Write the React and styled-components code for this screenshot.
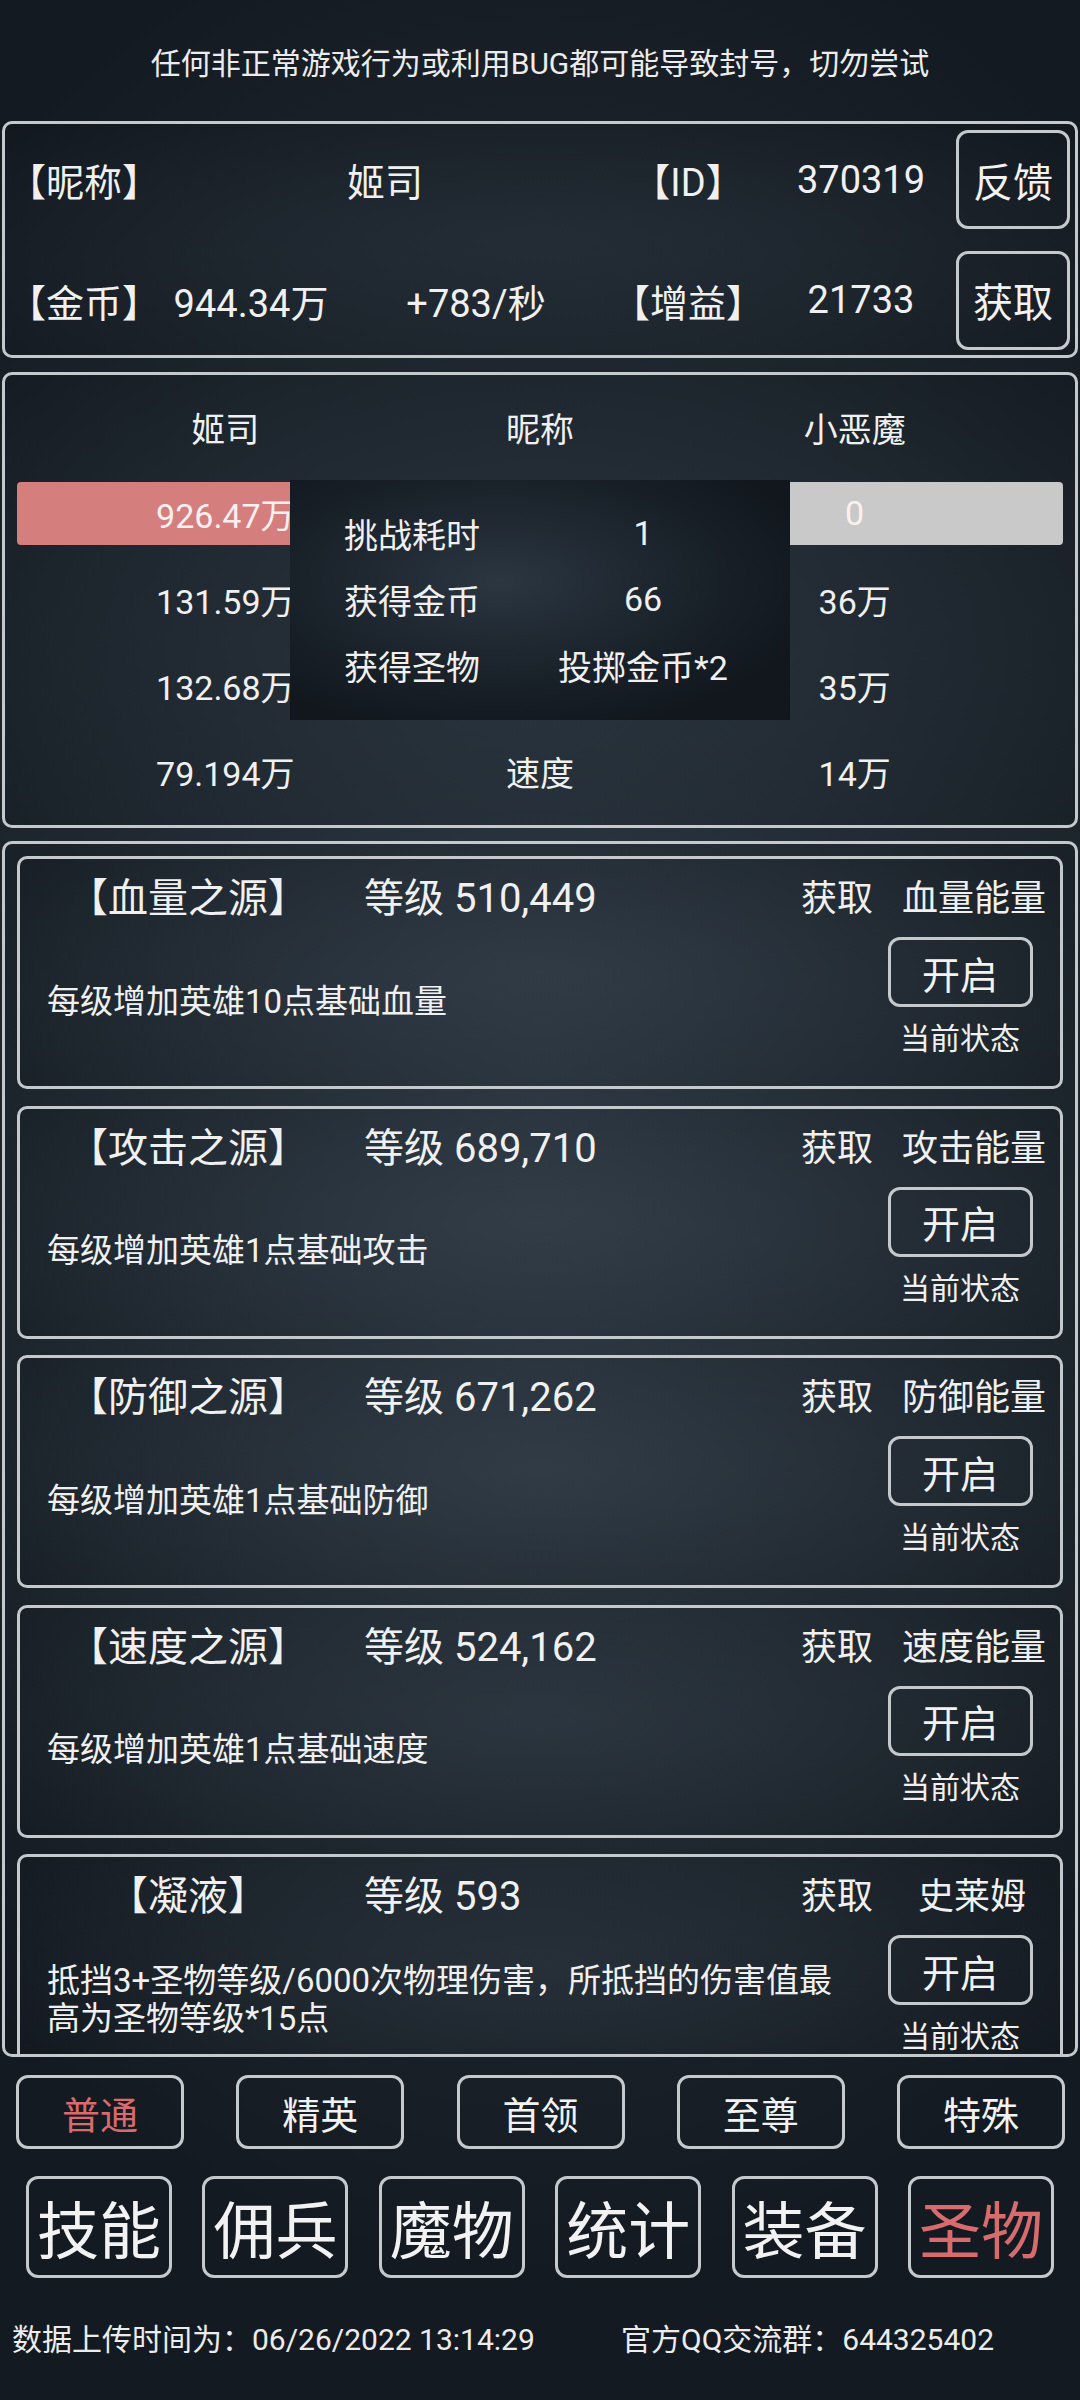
import React from 'react';
import styled, { createGlobalStyle } from 'styled-components';

const GlobalStyle = createGlobalStyle`
  html, body {
    margin: 0;
    padding: 0;
  }
  body {
    background: #151b22;
    font-family: Roboto, "Noto Sans CJK SC", sans-serif;
    color: #f0f0f0;
  }
  * {
    box-sizing: border-box;
  }
`;

const LINE = '#c6c9cc';
const RED = '#d86b6e';

const Page = styled.div`
  width: 1080px;
  height: 2400px;
  overflow: hidden;
  padding: 0 2px;
  display: flex;
  flex-direction: column;
  background: radial-gradient(ellipse 80% 50% at 50% 45%, #2d3843 0%, #1f2830 55%, #141a21 100%);
`;

const Notice = styled.div`
  height: 121px;
  flex-shrink: 0;
  display: flex;
  align-items: center;
  justify-content: center;
  font-size: 30px;
  color: #ececec;
`;

const Frame = styled.section`
  flex-shrink: 0;
  border: 3px solid ${LINE};
  border-radius: 10px;
  background: radial-gradient(ellipse at 50% 50%, rgba(60, 72, 84, 0.25), rgba(8, 12, 16, 0.15));
`;

// ---------- info panel ----------
const InfoPanel = styled(Frame)`
  height: 237px;
  padding-left: 3px;
  display: grid;
  grid-template-columns: 152px 182px 268px 156px 190px 114px;
  grid-template-rows: 99px 98px;
  row-gap: 22px;
  align-content: center;
  font-size: 38px;
`;

const Cell = styled.div`
  display: flex;
  align-items: center;
  justify-content: ${p => (p.$left ? 'flex-start' : 'center')};
  grid-column: ${p => p.$span || 'auto'};
  white-space: nowrap;
`;

const OutlineButton = styled.button`
  font-family: inherit;
  background: transparent;
  color: #f2f2f2;
  border: 3px solid ${LINE};
  border-radius: 12px;
  padding: 0;
  display: flex;
  align-items: center;
  justify-content: center;
  white-space: nowrap;
  cursor: pointer;
`;

const SideButton = styled(OutlineButton)`
  width: 114px;
  height: 99px;
  font-size: 40px;
  align-self: center;
`;

// ---------- battle panel ----------
const BattlePanel = styled(Frame)`
  position: relative;
  height: 456px;
  margin-top: 14px;
  padding: 9px 12px;
  font-size: 34px;
`;

const BattleRow = styled.div`
  height: 86px;
  padding: 0 51px;
  display: grid;
  grid-template-columns: repeat(3, 1fr);
  align-items: center;
  text-align: center;
  white-space: nowrap;
`;

const HpBar = styled(BattleRow)`
  height: 63px;
  margin: 11.5px 0;
  border-radius: 4px;
  background: linear-gradient(90deg, #d47e7e 0 50%, #c9c9c9 50% 100%);
  color: #fbf0f0;
`;

const ResultPopup = styled.div`
  position: absolute;
  left: 285px;
  top: 105px;
  width: 500px;
  height: 240px;
  padding: 20px 0 0 54px;
  display: grid;
  grid-template-columns: 186px 226px;
  grid-auto-rows: 66px;
  align-items: center;
  align-content: start;
  background: radial-gradient(ellipse 65% 65% at 42% 42%, #2b3641 0%, #1a222a 60%, #11171d 100%);
  font-size: 34px;
  white-space: nowrap;
`;

const PopupValue = styled.div`
  text-align: center;
`;

// ---------- relic list ----------
const RelicPanel = styled(Frame)`
  height: 1216px;
  margin-top: 13px;
  padding: 12px 12px 0;
  overflow: hidden;
  display: flex;
  flex-direction: column;
  gap: 16.5px;
`;

const RelicCard = styled.div`
  flex-shrink: 0;
  height: 233px;
  border: 3px solid ${LINE};
  border-radius: 10px;
  display: flex;
  flex-direction: column;
  background: radial-gradient(ellipse 70% 90% at 50% 50%, rgba(62, 74, 86, 0.3), rgba(8, 12, 16, 0.2));
`;

const CardHead = styled.div`
  height: 72px;
  padding-right: 18px;
  display: flex;
  align-items: center;
  white-space: nowrap;
`;

const RelicName = styled.div`
  width: 336px;
  text-align: center;
  font-size: 40px;
`;

const RelicLevel = styled.div`
  flex: 1;
  margin-left: 8px;
  font-size: 40px;
`;

const GetLabel = styled.div`
  width: 70px;
  text-align: center;
  font-size: 36px;
`;

const EnergyName = styled.div`
  width: 140px;
  margin-left: 31px;
  text-align: center;
  font-size: 36px;
`;

const CardBody = styled.div`
  flex: 1;
  display: flex;
  padding: 0 15px 0 27px;
`;

const RelicDesc = styled.div`
  flex: 1;
  align-self: center;
  max-width: 800px;
  margin-bottom: 14px;
  font-size: 33px;
  line-height: 38px;
`;

const SwitchColumn = styled.div`
  width: 170px;
  margin-left: auto;
  padding-top: 6px;
  display: flex;
  flex-direction: column;
  align-items: center;
`;

const SwitchButton = styled(OutlineButton)`
  width: 145px;
  height: 70px;
  font-size: 38px;
`;

const StateLabel = styled.div`
  margin-top: 14px;
  font-size: 30px;
  line-height: 36px;
  white-space: nowrap;
`;

// ---------- bottom navigation ----------
const TierRow = styled.div`
  flex-shrink: 0;
  margin-top: 18px;
  padding: 0 13px 0 14px;
  display: flex;
  justify-content: space-between;
`;

const TierTab = styled(OutlineButton)`
  width: 168px;
  height: 74px;
  font-size: 38px;
  color: ${p => (p.$active ? RED : '#f2f2f2')};
`;

const NavRow = styled.div`
  flex-shrink: 0;
  margin-top: 27px;
  padding: 0 24px;
  display: flex;
  justify-content: space-between;
`;

const NavTab = styled(OutlineButton)`
  width: 146px;
  height: 102px;
  font-size: 62px;
  color: ${p => (p.$active ? RED : '#f2f2f2')};
`;

const Footer = styled.div`
  flex-shrink: 0;
  margin-top: 42px;
  padding-left: 10px;
  display: flex;
  font-size: 30px;
  line-height: 40px;
  color: #ececec;
  white-space: nowrap;
`;

const UploadTime = styled.div`
  width: 609px;
`;

const relics = [
  { name: '【血量之源】', level: '510,449', energy: '血量能量', desc: '每级增加英雄10点基础血量' },
  { name: '【攻击之源】', level: '689,710', energy: '攻击能量', desc: '每级增加英雄1点基础攻击' },
  { name: '【防御之源】', level: '671,262', energy: '防御能量', desc: '每级增加英雄1点基础防御' },
  { name: '【速度之源】', level: '524,162', energy: '速度能量', desc: '每级增加英雄1点基础速度' },
  { name: '【凝液】', level: '593', energy: '史莱姆', desc: '抵挡3+圣物等级/6000次物理伤害，所抵挡的伤害值最高为圣物等级*15点' },
];

// middle labels of the first rows sit under the result popup
const stats = [
  { left: '131.59万', label: '', right: '36万' },
  { left: '132.68万', label: '', right: '35万' },
  { left: '79.194万', label: '速度', right: '14万' },
];

const tiers = ['普通', '精英', '首领', '至尊', '特殊'];
const navs = ['技能', '佣兵', '魔物', '统计', '装备', '圣物'];

const App = () => (
  <Page>
    <GlobalStyle />
    <Notice>任何非正常游戏行为或利用BUG都可能导致封号，切勿尝试</Notice>

    <InfoPanel>
      <Cell $left>【昵称】</Cell>
      <Cell $span="2 / 4">姬司</Cell>
      <Cell>【ID】</Cell>
      <Cell>370319</Cell>
      <SideButton>反馈</SideButton>

      <Cell $left>【金币】</Cell>
      <Cell>944.34万</Cell>
      <Cell>+783/秒</Cell>
      <Cell>【增益】</Cell>
      <Cell>21733</Cell>
      <SideButton>获取</SideButton>
    </InfoPanel>

    <BattlePanel>
      <BattleRow>
        <span>姬司</span>
        <span>昵称</span>
        <span>小恶魔</span>
      </BattleRow>
      <HpBar>
        <span>926.47万</span>
        <span />
        <span>0</span>
      </HpBar>
      {stats.map(s => (
        <BattleRow key={s.left}>
          <span>{s.left}</span>
          <span>{s.label}</span>
          <span>{s.right}</span>
        </BattleRow>
      ))}

      <ResultPopup>
        <span>挑战耗时</span>
        <PopupValue>1</PopupValue>
        <span>获得金币</span>
        <PopupValue>66</PopupValue>
        <span>获得圣物</span>
        <PopupValue>投掷金币*2</PopupValue>
      </ResultPopup>
    </BattlePanel>

    <RelicPanel>
      {relics.map(r => (
        <RelicCard key={r.name}>
          <CardHead>
            <RelicName>{r.name}</RelicName>
            <RelicLevel>等级 {r.level}</RelicLevel>
            <GetLabel>获取</GetLabel>
            <EnergyName>{r.energy}</EnergyName>
          </CardHead>
          <CardBody>
            <RelicDesc>{r.desc}</RelicDesc>
            <SwitchColumn>
              <SwitchButton>开启</SwitchButton>
              <StateLabel>当前状态</StateLabel>
            </SwitchColumn>
          </CardBody>
        </RelicCard>
      ))}
    </RelicPanel>

    <TierRow>
      {tiers.map((t, i) => (
        <TierTab key={t} $active={i === 0}>{t}</TierTab>
      ))}
    </TierRow>

    <NavRow>
      {navs.map((n, i) => (
        <NavTab key={n} $active={i === navs.length - 1}>{n}</NavTab>
      ))}
    </NavRow>

    <Footer>
      <UploadTime>数据上传时间为：06/26/2022 13:14:29</UploadTime>
      <span>官方QQ交流群：644325402</span>
    </Footer>
  </Page>
);

export default App;
